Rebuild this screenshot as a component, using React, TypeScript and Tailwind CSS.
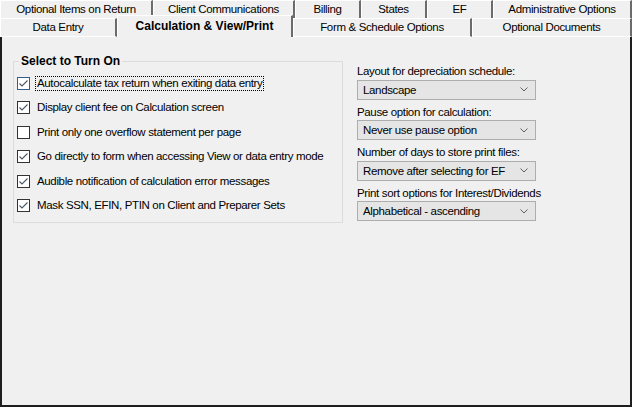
import React from "react";

const NARROW = { fontFamily: '"Liberation Sans", Arial, sans-serif' };
const BOLD = { fontFamily: '"Liberation Sans", Arial, sans-serif' };

const topTabs: [string, number][] = [
  ["Optional Items on Return", 153],
  ["Client Communications", 142],
  ["Billing", 66],
  ["States", 66],
  ["EF", 66],
  ["Administrative Options", 139],
];

const bottomTabs: [string, number, boolean][] = [
  ["Data Entry", 117, false],
  ["Calculation & View/Print", 176, true],
  ["Form & Schedule Options", 179, false],
  ["Optional Documents", 160, false],
];

const checks = [
  { label: "Autocalculate tax return when exiting data entry", on: true, focus: true },
  { label: "Display client fee on Calculation screen", on: true },
  { label: "Print only one overflow statement per page", on: false },
  { label: "Go directly to form when accessing View or data entry mode", on: true },
  { label: "Audible notification of calculation error messages", on: true },
  { label: "Mask SSN, EFIN, PTIN on Client and Preparer Sets", on: true },
];

const combos = [
  { label: "Layout for depreciation schedule:", value: "Landscape" },
  { label: "Pause option for calculation:", value: "Never use pause option" },
  { label: "Number of days to store print files:", value: "Remove after selecting for EF" },
  { label: "Print sort options for Interest/Dividends", value: "Alphabetical - ascending" },
];

function CheckBox({ on, focus }: { on: boolean; focus?: boolean }) {
  return (
    <span
      className={
        "flex h-[13px] w-[13px] shrink-0 items-center justify-center border bg-white " +
        (focus ? "border-[#2f5f94]" : "border-[#333333]")
      }
    >
      {on && (
        <svg width="11" height="11" viewBox="0 0 11 11">
          <polyline points="1.5,5.5 4,8 9.5,2.5" fill="none" stroke="#4a5766" strokeWidth="1.1" />
        </svg>
      )}
    </span>
  );
}

function Combo({ value }: { value: string }) {
  return (
    <div className="flex h-[20px] w-[179px] items-center justify-between border border-[#adadad] bg-[#e5e5e5] pl-[5px] pr-[7px] text-[11.5px] tracking-[-0.35px] leading-none text-black">
      <span className="whitespace-nowrap pt-[2px]">{value}</span>
      <svg width="8" height="5" viewBox="0 0 8 5">
        <polyline points="0.5,0.5 4,4 7.5,0.5" fill="none" stroke="#606060" strokeWidth="1" />
      </svg>
    </div>
  );
}

export default function App() {
  return (
    <div className="flex h-[407px] w-[632px] flex-col bg-[#f0f0f0] text-black" style={NARROW}>
      {/* top tab row */}
      <div className="flex h-[18px]">
        {topTabs.map(([label, w]) => (
          <div
            key={label}
            className="flex h-[18px] shrink-0 items-center justify-center whitespace-nowrap border-l border-t border-r-2 border-white border-r-[#6b6b6b] pt-[1px] text-[11.5px] tracking-[-0.35px] leading-none"
            style={{ width: w }}
          >
            {label}
          </div>
        ))}
      </div>

      {/* bottom tab row */}
      <div className="flex h-[19px] items-end">
        {bottomTabs.map(([label, w, sel]) =>
          sel ? (
            <div
              key={label}
              className="flex h-[22px] shrink-0 items-center justify-center whitespace-nowrap border-l border-t border-r-2 border-white border-r-[#6b6b6b] bg-[#f0f0f0] pb-[1px] text-[12px] font-bold leading-none"
              style={{ width: w, ...BOLD }}
            >
              {label}
            </div>
          ) : (
            <div
              key={label}
              className="flex h-[19px] shrink-0 items-center justify-center whitespace-nowrap border-l border-t border-b border-r-2 border-white border-r-[#6b6b6b] pt-[1px] text-[11.5px] tracking-[-0.35px] leading-none"
              style={{ width: w }}
            >
              {label}
            </div>
          )
        )}
      </div>

      {/* panel */}
      <div className="flex flex-1 items-start gap-[14px] border-x-2 border-b-2 border-[#1e1e1e] pt-[17px] pl-[11px]">
        <fieldset className="h-[169px] w-[330px] border border-[#dcdcdc] px-[3px] pt-[3px]">
          <legend className="ml-[2px] px-[2px] text-[12px] font-bold leading-[14px]" style={BOLD}>
            Select to Turn On
          </legend>
          {checks.map((c) => (
            <div
              key={c.label}
              className="flex h-[24.5px] items-center gap-[5px] whitespace-nowrap text-[11.5px] tracking-[-0.35px] leading-none"
            >
              <CheckBox on={c.on} focus={c.focus} />
              <span className={c.focus ? "border border-dotted border-black px-[1px] py-[1px]" : "px-[2px]"}>
                {c.label}
              </span>
            </div>
          ))}
        </fieldset>

        <div className="mt-[5px] flex flex-col">
          {combos.map((c) => (
            <div key={c.label} className="flex flex-col">
              <div className="flex h-[20.5px] items-center whitespace-nowrap pt-[5px] text-[11.5px] tracking-[-0.35px] leading-none">
                {c.label}
              </div>
              <Combo value={c.value} />
            </div>
          ))}
        </div>
      </div>
    </div>
  );
}
